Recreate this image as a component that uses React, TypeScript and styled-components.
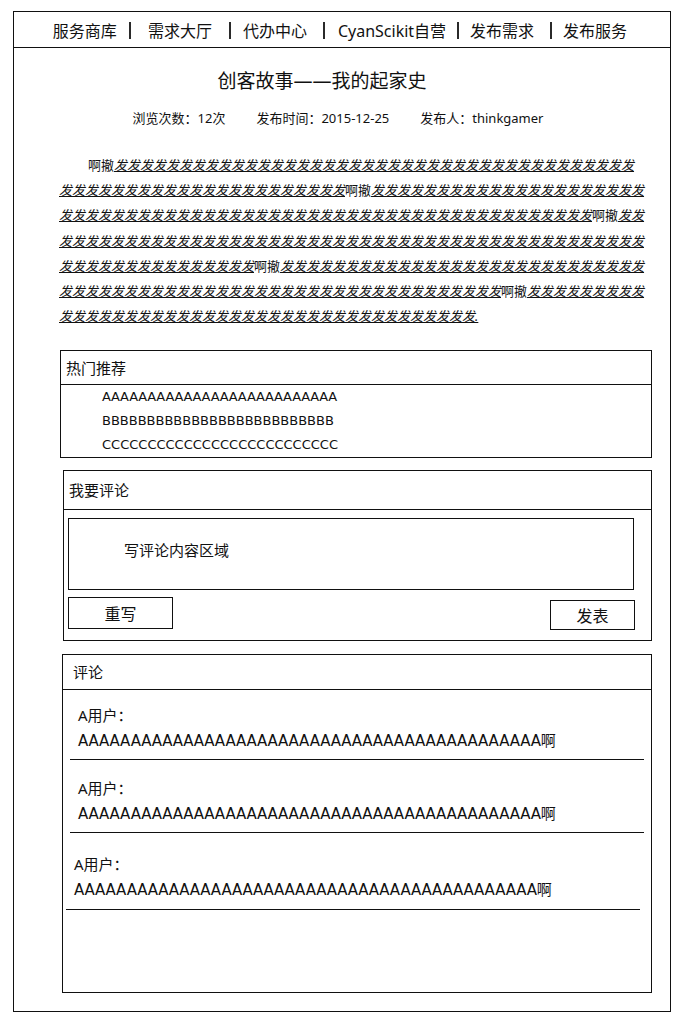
import styled, { createGlobalStyle } from 'styled-components';

const GlobalStyle = createGlobalStyle`
  body {
    margin: 0;
    background: #fff;
    color: #111;
    font-family: 'Noto Sans', 'Noto Sans CJK SC', sans-serif;
  }
  * {
    box-sizing: border-box;
  }
`;

const Frame = styled.div`
  width: 658px;
  height: 1001px;
  margin: 11px 0 0 13px;
  border: 1px solid #111;
`;

const NavBar = styled.nav`
  display: flex;
  align-items: center;
  justify-content: center;
  height: 36px;
  padding: 2px 4px 0 0;
  border-bottom: 1px solid #111;
  font-size: 16px;
  line-height: 20px;
`;

const NavLink = styled.a`
  color: #111;
  text-decoration: none;
  white-space: nowrap;
`;

const Sep = styled.span<{ $left: number; $right: number }>`
  display: inline-block;
  width: 2px;
  height: 17px;
  background: #2a2a2a;
  margin-left: ${(p) => p.$left}px;
  margin-right: ${(p) => p.$right}px;
`;

const Article = styled.section`
  padding-top: 20px;
`;

const Title = styled.h1`
  margin: 0;
  padding-right: 40px;
  text-align: center;
  font-size: 19px;
  font-weight: normal;
  line-height: 26px;
`;

const Meta = styled.div`
  display: flex;
  justify-content: center;
  gap: 31px;
  margin-top: 14px;
  padding-right: 8px;
  font-size: 13px;
  line-height: 20px;
`;

const Body = styled.p`
  width: 586px;
  margin: 25px 0 0 45px;
  font-size: 13px;
  line-height: 25.2px;
  text-indent: 29px;
  word-break: break-all;
`;

const Fa = styled.i`
  font-style: italic;
  text-decoration: underline;
  text-underline-offset: 1px;
`;

const Panel = styled.div<{ $left: number; $top: number }>`
  margin: ${(p) => p.$top}px 0 0 ${(p) => p.$left}px;
  width: ${(p) => 638 - p.$left}px;
  border: 1px solid #111;
`;

const PanelHead = styled.div<{ $h: number; $pad: number }>`
  height: ${(p) => p.$h}px;
  line-height: ${(p) => p.$h}px;
  padding-left: ${(p) => p.$pad}px;
  border-bottom: 1px solid #111;
  font-size: 15px;
`;

const HotList = styled.ul`
  list-style: none;
  margin: 0;
  padding: 0 0 0 41px;
  font-family: 'DejaVu Sans', 'Noto Sans CJK SC', sans-serif;
  font-size: 13px;
  line-height: 24px;
`;

const HotItem = styled.li<{ $spacing: number }>`
  letter-spacing: ${(p) => p.$spacing}px;
`;

const CommentBox = styled(Panel)`
  height: 339px;
`;

const Editor = styled.div`
  width: 566px;
  height: 72px;
  margin: 8px 0 0 4px;
  padding: 19px 0 0 55px;
  border: 1px solid #111;
  font-size: 15px;
  line-height: 24px;
`;

const Actions = styled.div`
  display: flex;
  justify-content: space-between;
  align-items: flex-start;
  padding: 7px 16px 10px 4px;
`;

const Button = styled.button<{ $w: number; $h: number; $mt: number }>`
  width: ${(p) => p.$w}px;
  height: ${(p) => p.$h}px;
  margin-top: ${(p) => p.$mt}px;
  padding: 0;
  border: 1px solid #111;
  background: #fff;
  color: #111;
  font-family: inherit;
  font-size: 16px;
`;

const Comment = styled.div<{ $shift: number; $top: number; $bottom: number }>`
  width: 574px;
  margin-left: ${(p) => 7 - p.$shift}px;
  padding: ${(p) => p.$top}px 0 ${(p) => p.$bottom}px 8px;
  border-bottom: 1px solid #111;
  font-size: 15px;
  line-height: 26px;
`;

const Author = styled.div``;

const Content = styled.div`
  white-space: nowrap;
  letter-spacing: -0.15px;
  font-family: 'DejaVu Sans', 'Noto Sans CJK SC', sans-serif;
`;

const faRun = (n: number) => '发'.repeat(n);

const hotItems = [
  { text: 'A'.repeat(26), spacing: -0.2 },
  { text: 'B'.repeat(26), spacing: 0 },
  { text: 'C'.repeat(26), spacing: 0 },
];

const comments = [
  { shift: 0, top: 12, bottom: 5 },
  { shift: 0, top: 15, bottom: 5 },
  { shift: 4, top: 18, bottom: 6 },
];

const App = () => {
  const runs = [62, 62, 62, 62, 41];

  return (
    <>
      <GlobalStyle />
      <Frame>
        <NavBar>
          <NavLink href="#">服务商库</NavLink>
          <Sep $left={12} $right={17} />
          <NavLink href="#">需求大厅</NavLink>
          <Sep $left={17} $right={12} />
          <NavLink href="#">代办中心</NavLink>
          <Sep $left={16} $right={13} />
          <NavLink href="#">CyanScikit自营</NavLink>
          <Sep $left={11} $right={11} />
          <NavLink href="#">发布需求</NavLink>
          <Sep $left={16} $right={11} />
          <NavLink href="#">发布服务</NavLink>
        </NavBar>

        <Article>
          <Title>创客故事——我的起家史</Title>
          <Meta>
            <span>浏览次数：12次</span>
            <span>发布时间：2015-12-25</span>
            <span>发布人：thinkgamer</span>
          </Meta>
          <Body>
            {runs.map((n, i) => (
              <span key={i}>
                啊撤
                <Fa>{faRun(n) + (i === runs.length - 1 ? '.' : '')}</Fa>
              </span>
            ))}
          </Body>
        </Article>

        <Panel $left={46} $top={21}>
          <PanelHead $h={34} $pad={5}>热门推荐</PanelHead>
          <HotList>
            {hotItems.map((t) => (
              <HotItem key={t.text} $spacing={t.spacing}>
                {t.text}
              </HotItem>
            ))}
          </HotList>
        </Panel>

        <Panel $left={49} $top={12}>
          <PanelHead $h={39} $pad={5}>我要评论</PanelHead>
          <Editor>写评论内容区域</Editor>
          <Actions>
            <Button type="button" $w={105} $h={32} $mt={0}>
              重写
            </Button>
            <Button type="button" $w={85} $h={30} $mt={3}>
              发表
            </Button>
          </Actions>
        </Panel>

        <CommentBox $left={48} $top={13}>
          <PanelHead $h={35} $pad={10}>评论</PanelHead>
          {comments.map((c, i) => (
            <Comment key={i} $shift={c.shift} $top={c.top} $bottom={c.bottom}>
              <Author>A用户：</Author>
              <Content>{'A'.repeat(44)}啊</Content>
            </Comment>
          ))}
        </CommentBox>
      </Frame>
    </>
  );
};

export default App;
